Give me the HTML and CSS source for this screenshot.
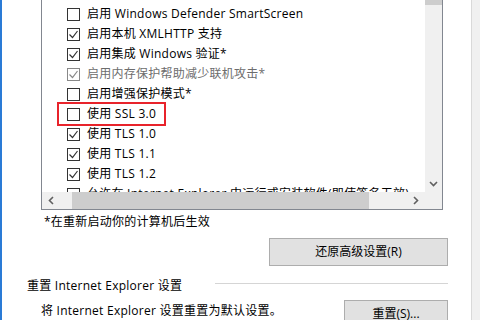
FILE: index.html
```html
<!DOCTYPE html>
<html lang="zh-CN">
<head>
<meta charset="UTF-8">
<title>Internet 选项 - 高级</title>
<link rel="stylesheet" href="styles.css">
</head>
<body>
<div class="page">

  <!-- settings list -->
  <div class="listbox">
    <div class="list">
      <div class="row"><span class="cb"></span>启用 Windows Defender SmartScreen</div>
      <div class="row"><span class="cb on"><svg viewBox="0 0 11 11"><path d="M1.5 5.5l3 3 5-6.5"/></svg></span>启用本机 XMLHTTP 支持</div>
      <div class="row"><span class="cb on"><svg viewBox="0 0 11 11"><path d="M1.5 5.5l3 3 5-6.5"/></svg></span>启用集成 Windows 验证*</div>
      <div class="row off"><span class="cb on"><svg viewBox="0 0 11 11"><path d="M1.5 5.5l3 3 5-6.5"/></svg></span>启用内存保护帮助减少联机攻击*</div>
      <div class="row"><span class="cb"></span>启用增强保护模式*</div>
      <div class="row mark"><span class="cb"></span>使用 SSL 3.0</div>
      <div class="row"><span class="cb on"><svg viewBox="0 0 11 11"><path d="M1.5 5.5l3 3 5-6.5"/></svg></span>使用 TLS 1.0</div>
      <div class="row"><span class="cb on"><svg viewBox="0 0 11 11"><path d="M1.5 5.5l3 3 5-6.5"/></svg></span>使用 TLS 1.1</div>
      <div class="row"><span class="cb on"><svg viewBox="0 0 11 11"><path d="M1.5 5.5l3 3 5-6.5"/></svg></span>使用 TLS 1.2</div>
      <div class="row"><span class="cb"></span>允许在 Internet Explorer 中运行或安装软件(即使签名无效)</div>
    </div>
    <div class="vscroll">
      <div class="vthumb"></div>
      <svg class="arrow" viewBox="0 0 9 6"><path d="M1 1l3.5 3.5L8 1"/></svg>
    </div>
    <div class="hscroll">
      <svg class="arrow" viewBox="0 0 6 9"><path d="M5 1L1.5 4.5 5 8"/></svg>
      <div class="hthumb"></div>
      <svg class="arrow" viewBox="0 0 6 9"><path d="M1 1l3.5 3.5L1 8"/></svg>
    </div>
    <div class="corner"></div>
  </div>

  <p class="note">*在重新启动你的计算机后生效</p>

  <div class="btnrow">
    <button class="btn wide">还原高级设置(R)</button>
  </div>

  <div class="group">
    <div class="gtitle"><span>重置 Internet Explorer 设置</span><i class="rule"></i></div>
    <div class="greset">
      <span>将 Internet Explorer 设置重置为默认设置。</span>
      <button class="btn">重置(S)...</button>
    </div>
  </div>

</div>
</body>
</html>
```

FILE: styles.css
```css
/* reset */
*{box-sizing:border-box;margin:0;padding:0}
html,body{width:480px;height:320px;overflow:hidden;background:#f0f0f0}
body{font:12px/20px "Open Sans","Noto Sans CJK SC",sans-serif;color:#000;letter-spacing:.25px}

/* tab page */
.page{
  width:472px;height:320px;background:#fff;
  border-left:2px solid #2a7bd6;border-right:1px solid #d9d9d9;
  display:flex;flex-direction:column;
}

/* list box */
.listbox{
  margin:-1px 0 0 39px;width:402px;height:211px;
  border:1px solid #828790;
  display:grid;grid-template-columns:1fr 17px;grid-template-rows:1fr 17px;
}
.list{overflow:hidden;padding:4px 0 0 25px;white-space:nowrap}
.row{display:flex;align-items:center;height:20px;gap:7px}
.row.off{color:#6d6d6d}
.row.mark{position:relative}
.row.mark::after{
  content:"";position:absolute;left:-10px;top:-2px;width:105px;height:20px;
  border:2px solid #e8232b;
}
.cb{width:13px;height:13px;border:1px solid #333;background:#fff;flex:none;display:flex}
.cb svg{width:11px;height:11px;fill:none;stroke:#333;stroke-width:1.2}
.row.off .cb{border-color:#888}
.row.off .cb svg{stroke:#888}

/* scrollbars */
.vscroll{background:#f0f0f0;display:flex;flex-direction:column;align-items:center;justify-content:space-between;padding-bottom:5px}
.vthumb{width:17px;height:5px;background:#cdcdcd}
.hscroll{background:#f0f0f0;display:flex;align-items:center;padding-left:6px}
.hthumb{width:297px;height:17px;background:#cdcdcd;margin:0 auto 0 12px}
.hscroll .arrow{width:6px;height:9px;margin-right:6px}
.vscroll .arrow{width:9px;height:6px}
.arrow{fill:none;stroke:#606060;stroke-width:1.6}
.corner{background:#f0f0f0}

/* below list */
.note{margin:2px 0 0 42px;line-height:20px}
.btnrow{display:flex;justify-content:flex-end;padding-right:23px;margin-top:6px}
.btn{
  font:inherit;color:#000;background:#e1e1e1;border:1px solid #adadad;
  height:28px;
}
.btn.wide{width:179px}

/* reset group */
.group{margin-top:10px;padding:0 23px 0 25px}
.gtitle{display:flex;align-items:center}
.rule{flex:1;height:1px;background:#d5d5d5;margin:-5px 0 0 33px}
.greset{display:flex;justify-content:space-between;align-items:flex-start;margin-top:4px;padding-left:14px}
.greset span{margin-top:1px}
.greset .btn{width:104px}
```
